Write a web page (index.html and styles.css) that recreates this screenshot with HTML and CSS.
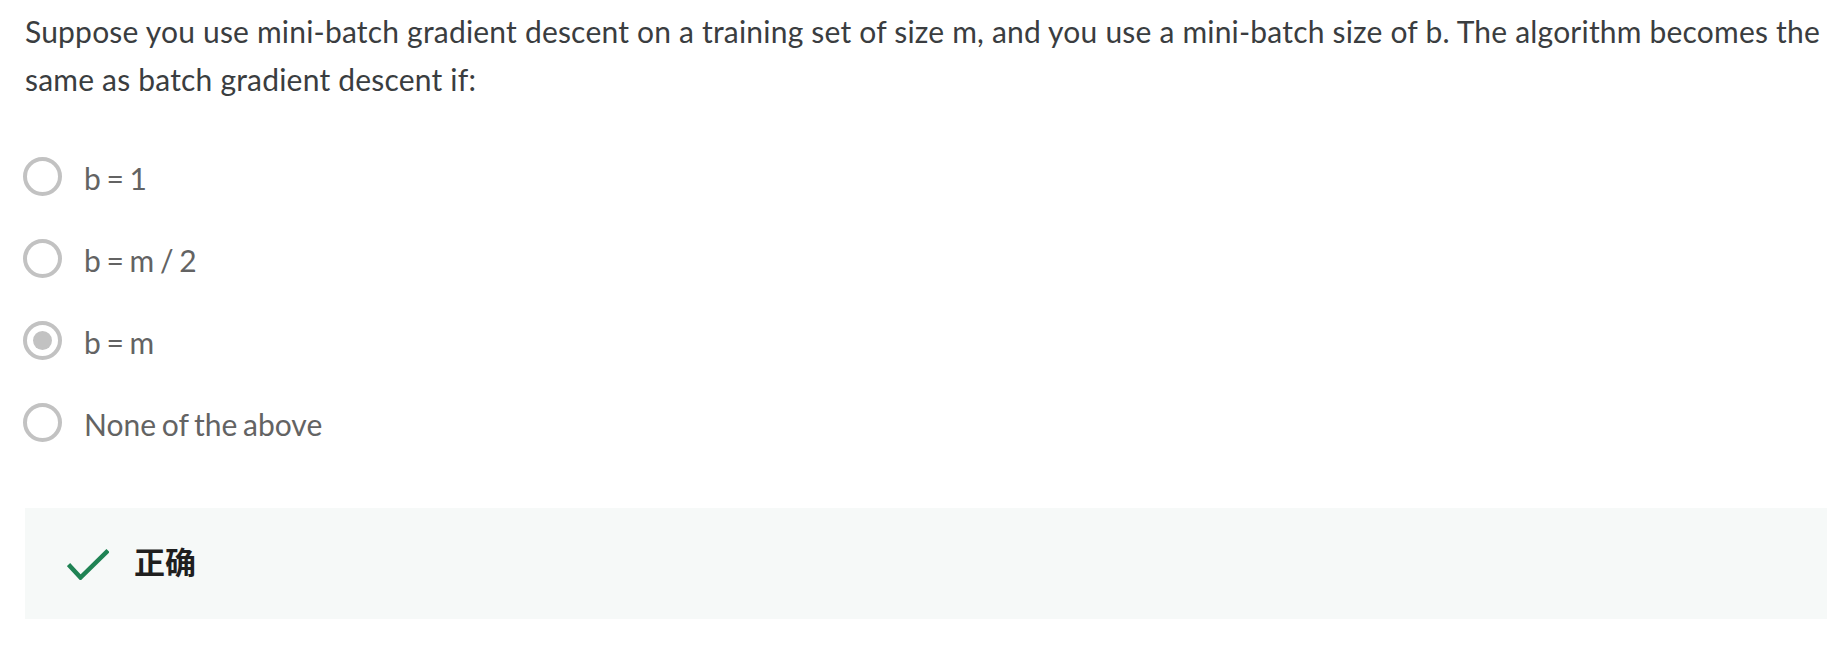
FILE: index.html
```html
<!DOCTYPE html>
<html>
<head>
<meta charset="utf-8">
<link rel="stylesheet" href="styles.css">
</head>
<body>
<div class="quiz">
  <p class="question">Suppose you use mini-batch gradient descent on a training set of size m, and you use a mini-batch size of b. The algorithm becomes the same as batch gradient descent if:</p>
  <div class="options">
    <div class="option"><span class="radio"></span><span class="label">b = 1</span></div>
    <div class="option"><span class="radio"></span><span class="label">b = m / 2</span></div>
    <div class="option"><span class="radio checked"></span><span class="label">b = m</span></div>
    <div class="option"><span class="radio"></span><span class="label">None of the above</span></div>
  </div>
  <div class="feedback">
    <svg class="check" width="42" height="32" viewBox="0 0 42 32"><polyline points="1.5,16.5 13.5,29.5 41,2.5" fill="none" stroke="#1f8354" stroke-width="4.5"/></svg>
    <span class="result">正确</span>
  </div>
</div>
</body>
</html>
```
FILE: styles.css
```css
html, body {
  margin: 0;
  padding: 0;
  background: #ffffff;
}
.quiz {
  width: 1802px;
  padding: 7px 0 0 25px;
  font-family: Lato, "Noto Sans", sans-serif;
}
.question {
  margin: 0;
  font-size: 30px;
  letter-spacing: 0.2px;
  line-height: 48px;
  color: #3a3d40;
}
.options {
  margin-top: 32px;
  display: flex;
  flex-direction: column;
}
.option {
  height: 82px;
  display: flex;
  align-items: center;
  margin-left: -2px;
}
.radio {
  box-sizing: border-box;
  width: 39px;
  height: 39px;
  border: 4px solid #c2c2c2;
  border-radius: 50%;
  flex: none;
  display: flex;
  align-items: center;
  justify-content: center;
}
.radio.checked::after {
  content: "";
  width: 19px;
  height: 19px;
  border-radius: 50%;
  background: #c2c2c2;
}
.label {
  margin-left: 22px;
  padding-top: 3px;
  font-size: 30px;
  word-spacing: -2px;
  color: #636363;
}
.feedback {
  margin-top: 45px;
  height: 111px;
  background: #f6f9f8;
  display: flex;
  align-items: center;
  padding-left: 42px;
}
.check {
  flex: none;
}
.result {
  margin-left: 25px;
  margin-top: -6px;
  font-family: "Noto Sans CJK SC", sans-serif;
  font-weight: 700;
  font-size: 31px;
  color: #1f1f1f;
}
```
